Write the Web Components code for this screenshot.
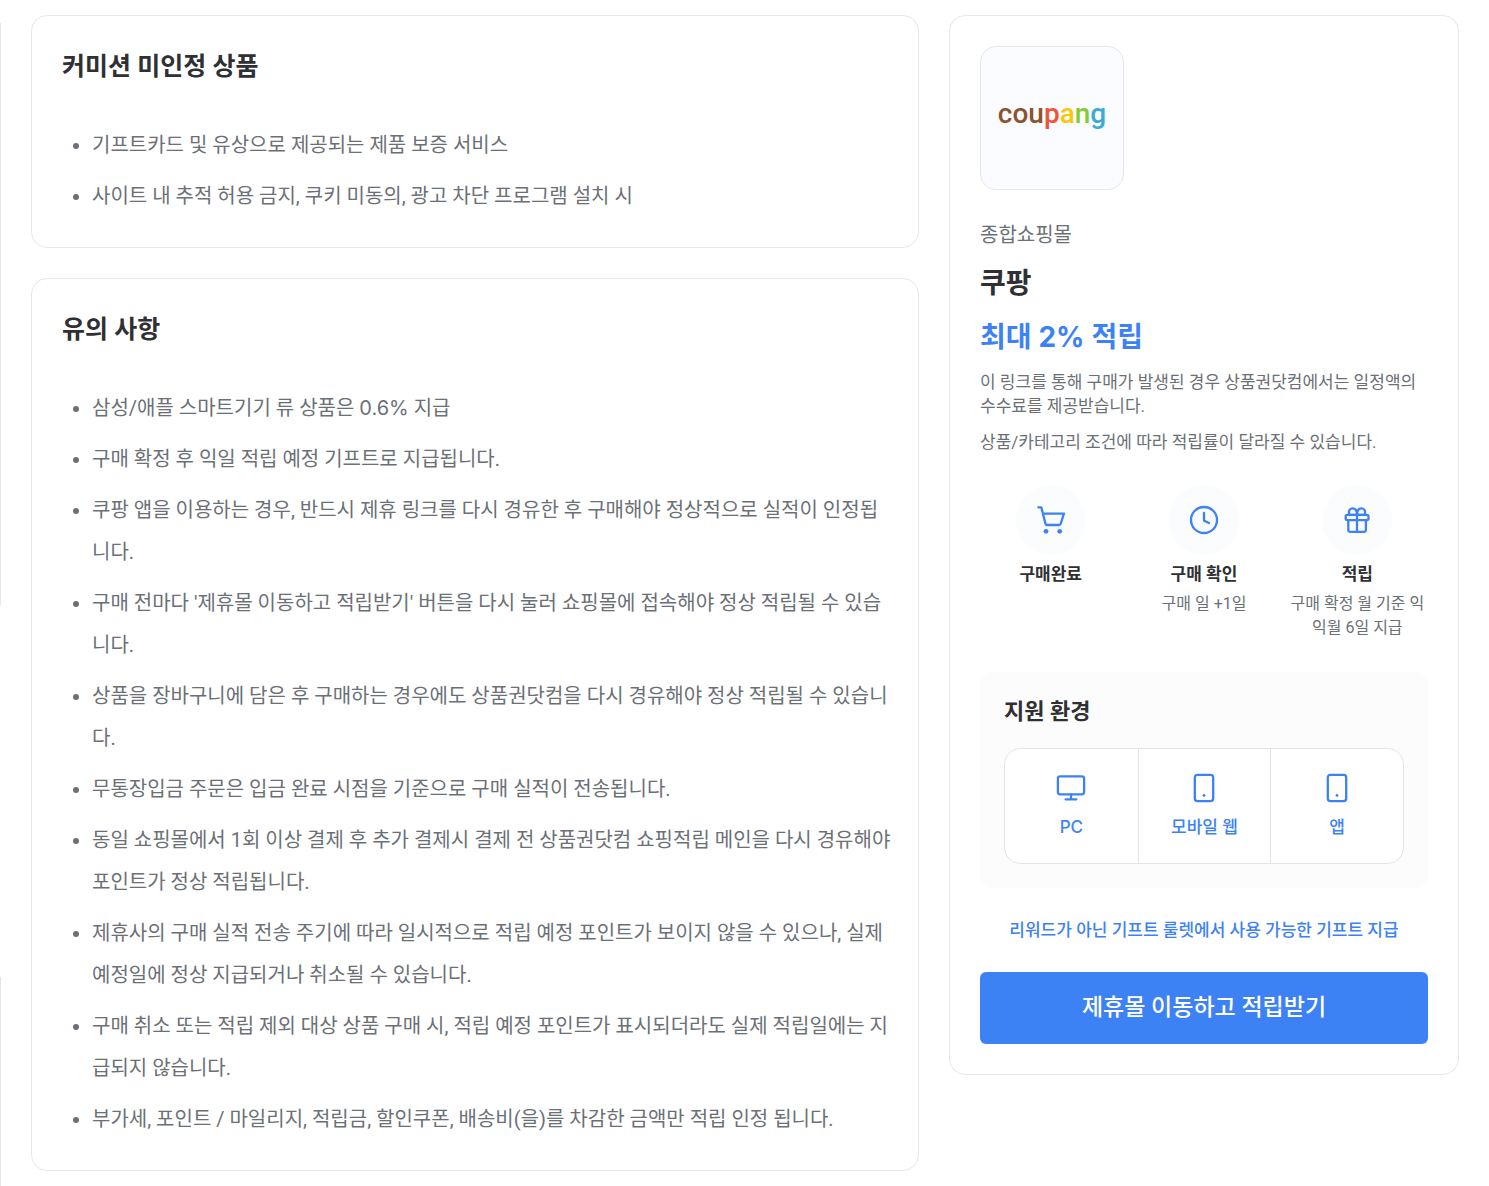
<!DOCTYPE html>
<html lang="ko">
<head>
<meta charset="utf-8">
<meta name="viewport" content="width=device-width, initial-scale=1">
<title>쿠팡 적립 안내</title>
<style>
    body {
        margin: 0;
        background-color: #fff;
        color: #6b7077;
        font-family: Roboto, "Noto Sans CJK KR", sans-serif;
        font-size: 20px;
    }
</style>
</head>
<body>
<mall-page>
    <notice-card>
        <span slot="title">커미션 미인정 상품</span>
        <li>기프트카드 및 유상으로 제공되는 제품 보증 서비스</li>
        <li>사이트 내 추적 허용 금지, 쿠키 미동의, 광고 차단 프로그램 설치 시</li>
    </notice-card>
    <notice-card>
        <span slot="title">유의 사항</span>
        <li>삼성/애플 스마트기기 류 상품은 <latin-text>0.6%</latin-text> 지급</li>
        <li>구매 확정 후 익일 적립 예정 기프트로 지급됩니다.</li>
        <li>쿠팡 앱을 이용하는 경우, 반드시 제휴 링크를 다시 경유한 후 구매해야 정상적으로 실적이 인정됩니다.</li>
        <li>구매 전마다 '제휴몰 이동하고 적립받기' 버튼을 다시 눌러 쇼핑몰에 접속해야 정상 적립될 수 있습니다.</li>
        <li>상품을 장바구니에 담은 후 구매하는 경우에도 상품권닷컴을 다시 경유해야 정상 적립될 수 있습니다.</li>
        <li>무통장입금 주문은 입금 완료 시점을 기준으로 구매 실적이 전송됩니다.</li>
        <li>동일 쇼핑몰에서 1회 이상 결제 후 추가 결제시 결제 전 상품권닷컴 쇼핑적립 메인을 다시 경유해야 포인트가 정상 적립됩니다.</li>
        <li>제휴사의 구매 실적 전송 주기에 따라 일시적으로 적립 예정 포인트가 보이지 않을 수 있으나, 실제 예정일에 정상 지급되거나 취소될 수 있습니다.</li>
        <li>구매 취소 또는 적립 제외 대상 상품 구매 시, 적립 예정 포인트가 표시되더라도 실제 적립일에는 지급되지 않습니다.</li>
        <li>부가세, 포인트 / 마일리지, 적립금, 할인쿠폰, 배송비(을)를 차감한 금액만 적립 인정 됩니다.</li>
    </notice-card>
    <mall-card slot="side">
        <coupang-logo slot="logo"></coupang-logo>
        <span slot="category">종합쇼핑몰</span>
        <span slot="name">쿠팡</span>
        <span slot="rate">최대 <latin-text>2%</latin-text> 적립</span>
        <p>이 링크를 통해 구매가 발생된 경우 상품권닷컴에서는 일정액의 수수료를 제공받습니다.</p>
        <p>상품/카테고리 조건에 따라 적립률이 달라질 수 있습니다.</p>
        <reward-step slot="step" icon="cart" label="구매완료"></reward-step>
        <reward-step slot="step" icon="clock" label="구매 확인">구매 일 +1일</reward-step>
        <reward-step slot="step" icon="gift" label="적립">구매 확정 월 기준 익익월 6일 지급</reward-step>
        <support-env slot="env">
            <env-item icon="monitor"><latin-text>PC</latin-text></env-item>
            <env-item icon="phone">모바일 웹</env-item>
            <env-item icon="phone">앱</env-item>
        </support-env>
        <span slot="note">리워드가 아닌 기프트 룰렛에서 사용 가능한 기프트 지급</span>
        <span slot="action">제휴몰 이동하고 적립받기</span>
    </mall-card>
</mall-page>

<script>
const ICONS = {
    cart: `
        <path d="M3.3 3.3h3l4.1 16.1a2 2 0 0 0 2 1.6h11.4a2 2 0 0 0 2-1.5L28.9 9.7H8"/>
        <circle cx="11" cy="27.3" r="2.4" fill="currentColor" stroke="none"/>
        <circle cx="24.7" cy="27.3" r="2.4" fill="currentColor" stroke="none"/>`,
    clock: `
        <circle cx="16" cy="16" r="13"/>
        <path d="M16 9v7.6l5 2.4"/>`,
    gift: `
        <rect x="4.7" y="10.8" width="22.8" height="5.4" rx="1.6"/>
        <path d="M7.3 16.2v9.6a2 2 0 0 0 2 2h13.6a2 2 0 0 0 2-2v-9.6M16 10.8v17"/>
        <path d="M16 10.8H8.6C6.8 7.6 8.6 4.4 11.4 4.4c3 0 4.6 2.8 4.6 6.4zM16 10.8h7.4c1.8-3.2 0-6.4-2.8-6.4-3 0-4.6 2.8-4.6 6.4z"/>`,
    monitor: `
        <rect x="2.9" y="4.4" width="26.2" height="17.9" rx="2.2"/>
        <path d="M16 22.3v5M10.6 27.3h10.8"/>`,
    phone: `
        <rect x="6.8" y="2.8" width="18.4" height="26.4" rx="2.6"/>
        <circle cx="16" cy="23.4" r="1.4" fill="currentColor" stroke="none"/>`
};

class LineIcon extends HTMLElement {
    constructor() {
        super();
        this.shadowObj = this.attachShadow({ mode: 'open' });
    };

    connectedCallback() {
        this.shadowObj.innerHTML = `
        <style>
            :host {
                display: block;
                width: 32px;
                height: 32px;
                color: #3d82f5;
            }
            svg {
                display: block;
            }
        </style>
        <svg width="32" height="32" viewBox="0 0 32 32" fill="none" stroke="currentColor"
            stroke-width="2.3" stroke-linecap="round" stroke-linejoin="round" aria-hidden="true">
            ${ICONS[this.getAttribute('name')]}
        </svg>
        `;
    };
};

// Figures and latin words that stand out use Inter next to the Korean face
class LatinText extends HTMLElement {
    constructor() {
        super();
        this.attachShadow({ mode: 'open' }).innerHTML = `
        <style>
            :host {
                font-family: Inter, sans-serif;
                line-height: 1;
            }
        </style>
        <slot></slot>
        `.trim();
    };
};

class MallPage extends HTMLElement {
    constructor() {
        super();
        this.attachShadow({ mode: 'open' }).innerHTML = `
        <style>
            :host {
                display: grid;
                grid-template-columns: 1px minmax(0, 1fr) 510px;
                column-gap: 30px;
                padding-right: 30px;
            }
            .rail {
                display: flex;
                flex-direction: column;
                justify-content: space-between;
                padding-top: 23px;
            }
            .rail i {
                background-color: #e5e7eb;
            }
            .rail i:first-child {
                flex: 0 0 50%;
            }
            .rail i:last-child {
                flex: 0 0 18%;
            }
            main, aside {
                padding: 15px 0;
            }
            main {
                display: flex;
                flex-direction: column;
                gap: 30px;
            }
        </style>
        <div class="rail"><i></i><i></i></div>
        <main><slot></slot></main>
        <aside><slot name="side"></slot></aside>
        `;
    };
};

class NoticeCard extends HTMLElement {
    constructor() {
        super();
        this.attachShadow({ mode: 'open' }).innerHTML = `
        <style>
            :host {
                display: block;
                padding: 30px 24px 30px 30px;
                border: 1px solid #e5e7eb;
                border-radius: 16px;
            }
            h2 {
                margin: 0 0 36px;
                color: #2f3033;
                font-size: 25px;
                font-weight: 600;
                line-height: 42px;
            }
            ul {
                display: flex;
                flex-direction: column;
                gap: 9px;
                margin: 0;
                padding-left: 30px;
                line-height: 42px;
            }
        </style>
        <h2><slot name="title"></slot></h2>
        <ul><slot></slot></ul>
        `;
    };
};

class CoupangLogo extends HTMLElement {
    constructor() {
        super();
        this.attachShadow({ mode: 'open' }).innerHTML = `
        <style>
            :host {
                display: flex;
                align-items: center;
                justify-content: center;
                box-sizing: border-box;
                width: 144px;
                height: 144px;
                padding-bottom: 8px;
                border: 1px solid #e5e7eb;
                border-radius: 16px;
                background-color: #fafcff;
                color: #8c532c;
                font-family: Roboto, sans-serif;
                font-size: 28px;
                font-weight: 500;
                line-height: 40px;
            }
            .p { color: #ee5537; }
            .a { color: #fbc707; }
            .n { color: #85cc32; }
            .g { color: #39acd8; }
        </style>
        <div>cou<span class="p">p</span><span class="a">a</span><span class="n">n</span><span class="g">g</span></div>
        `;
    };
};

class RewardStep extends HTMLElement {
    constructor() {
        super();
        this.shadowObj = this.attachShadow({ mode: 'open' });
    };

    connectedCallback() {
        this.shadowObj.innerHTML = `
        <style>
            :host {
                display: flex;
                flex-direction: column;
                align-items: center;
                text-align: center;
            }
            .circle {
                display: flex;
                align-items: center;
                justify-content: center;
                width: 70px;
                height: 70px;
                border-radius: 50%;
                background-color: #fafcfe;
            }
            strong {
                margin: 7px 0 6px;
                color: #2f3033;
                font-size: 17px;
                font-weight: 600;
                line-height: 24px;
            }
            div:last-child {
                font-size: 16px;
                line-height: 24px;
            }
        </style>
        <div class="circle"><line-icon name="${this.getAttribute('icon')}"></line-icon></div>
        <strong>${this.getAttribute('label')}</strong>
        <div><slot></slot></div>
        `;
    };
};

class EnvItem extends HTMLElement {
    constructor() {
        super();
        this.shadowObj = this.attachShadow({ mode: 'open' });
    };

    connectedCallback() {
        this.shadowObj.innerHTML = `
        <style>
            :host {
                display: flex;
                flex-direction: column;
                align-items: center;
                gap: 11px;
                padding: 23px 0 24px;
                color: #3d82f5;
                font-size: 17px;
                font-weight: 500;
                line-height: 24px;
            }
        </style>
        <line-icon name="${this.getAttribute('icon')}"></line-icon>
        <div><slot></slot></div>
        `;
    };
};

class SupportEnv extends HTMLElement {
    constructor() {
        super();
        this.attachShadow({ mode: 'open' }).innerHTML = `
        <style>
            :host {
                display: block;
                padding: 24px;
                border-radius: 12px;
                background-color: #fcfcfc;
            }
            h3 {
                margin: 0 0 20px;
                color: #2f3033;
                font-size: 22px;
                font-weight: 600;
                line-height: 32px;
            }
            .items {
                display: grid;
                grid-template-columns: repeat(3, 1fr);
                border: 1px solid #e3e5e8;
                border-radius: 16px;
                background-color: #fff;
            }
            ::slotted(env-item:not(:first-child)) {
                border-left: 1px solid #e3e5e8;
            }
        </style>
        <h3>지원 환경</h3>
        <div class="items"><slot></slot></div>
        `;
    };
};

class MallCard extends HTMLElement {
    constructor() {
        super();
        this.attachShadow({ mode: 'open' }).innerHTML = `
        <style>
            :host {
                display: block;
                padding: 30px;
                border: 1px solid #e5e7eb;
                border-radius: 16px;
            }
            .category {
                margin-top: 28px;
                line-height: 34px;
            }
            h1, .rate {
                margin: 10px 0;
                font-size: 28px;
                font-weight: 600;
                line-height: 44px;
            }
            h1 {
                color: #2f3033;
            }
            .rate {
                color: #3d82f5;
                font-weight: 700;
            }
            .desc {
                display: flex;
                flex-direction: column;
                gap: 12px;
                font-size: 17px;
                line-height: 24px;
            }
            ::slotted(p) {
                margin: 0;
            }
            .steps {
                display: grid;
                grid-template-columns: repeat(3, 1fr);
                gap: 12px;
                margin: 31px 0 32px;
            }
            .note {
                margin: 30px 0;
                color: #3d82f5;
                font-size: 17px;
                font-weight: 500;
                line-height: 24px;
                text-align: center;
            }
            button {
                display: block;
                width: 100%;
                padding: 18px;
                border: 0;
                border-radius: 6px;
                background-color: #3d82f5;
                color: #fff;
                font-family: inherit;
                font-size: 23px;
                font-weight: 500;
                line-height: 36px;
                cursor: pointer;
            }
        </style>
        <slot name="logo"></slot>
        <div class="category"><slot name="category"></slot></div>
        <h1><slot name="name"></slot></h1>
        <div class="rate"><slot name="rate"></slot></div>
        <div class="desc"><slot></slot></div>
        <div class="steps"><slot name="step"></slot></div>
        <slot name="env"></slot>
        <div class="note"><slot name="note"></slot></div>
        <button type="button"><slot name="action"></slot></button>
        `;
    };
};

customElements.define("line-icon", LineIcon);
customElements.define("latin-text", LatinText);
customElements.define("coupang-logo", CoupangLogo);
customElements.define("notice-card", NoticeCard);
customElements.define("reward-step", RewardStep);
customElements.define("env-item", EnvItem);
customElements.define("support-env", SupportEnv);
customElements.define("mall-card", MallCard);
customElements.define("mall-page", MallPage);
</script>
</body>
</html>
